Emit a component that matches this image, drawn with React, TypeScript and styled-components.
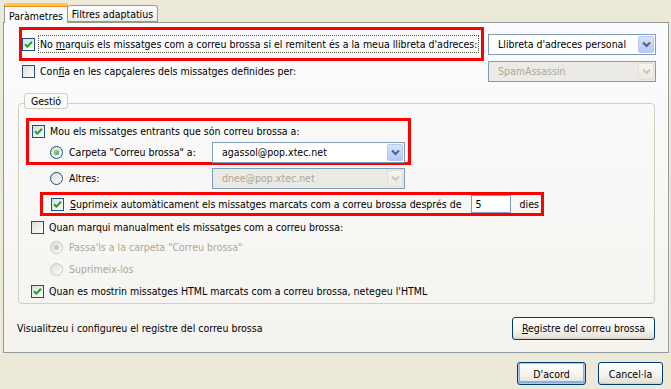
import styled, { createGlobalStyle } from "styled-components";

const GlobalStyle = createGlobalStyle`
  html, body {
    margin: 0;
    padding: 0;
    background: #ece9d8;
  }
  body {
    font-family: "DejaVu Sans Condensed", "DejaVu Sans", sans-serif;
    font-size: 10.5px;
    color: #000;
  }
`;

const Window = styled.div`
  width: 671px;
  height: 389px;
  box-sizing: border-box;
  padding-top: 3px;
  background: #ece9d8;
  overflow: hidden;
`;

const TabStrip = styled.div`
  display: flex;
  align-items: flex-end;
  height: 20px;
  margin: 0 0 -1px 4px;
  position: relative;
  z-index: 2;
`;

const Tab = styled.div<{ $active?: boolean }>`
  box-sizing: border-box;
  display: flex;
  align-items: center;
  justify-content: center;
  border: 1px solid #919b9c;
  border-radius: 3px 3px 0 0;
  ${(p) =>
    p.$active
      ? `
    height: 20px;
    width: 64px;
    padding-top: 2px;
    background: #fcfcfe;
    border-top: 3px solid #ffc83c;
    border-bottom: none;
    box-shadow: inset 0 1px 0 #e68b2c;
  `
      : `
    height: 17px;
    width: 90px;
    margin-bottom: 1px;
    border-left: none;
    background: linear-gradient(#ffffff, #ecebe6);
  `}
`;

const Panel = styled.div`
  position: relative;
  z-index: 1;
  box-sizing: border-box;
  margin-left: 3px;
  width: 666px;
  height: 331px;
  border: 1px solid #919b9c;
  background: linear-gradient(#fcfcfe, #f4f3ee);
  padding: 0 13px 0 14px;
  display: flex;
  flex-direction: column;
`;

const TopRow = styled.div`
  display: flex;
  align-items: center;
  justify-content: space-between;
  margin: 4px -1px 0 1px;
  height: 34px;
`;

const Row = styled.div<{ $h?: number; $mt?: number; $ml?: number }>`
  display: flex;
  align-items: center;
  height: ${(p) => p.$h ?? 20}px;
  margin-top: ${(p) => p.$mt ?? 0}px;
  margin-left: ${(p) => p.$ml ?? 0}px;
`;

const SpreadRow = styled(Row)`
  justify-content: space-between;
  margin-right: -1px;
`;

const Mark = styled.div<{ $w?: number; $h: number; $ml?: number; $mt?: number; $pl?: number }>`
  box-sizing: border-box;
  border: 3px solid #ff0000;
  height: ${(p) => p.$h}px;
  width: ${(p) => (p.$w ? `${p.$w}px` : "fit-content")};
  margin-left: ${(p) => p.$ml ?? 0}px;
  margin-top: ${(p) => p.$mt ?? 0}px;
  padding-left: ${(p) => p.$pl ?? 0}px;
`;

const MarkRow = styled(Mark)`
  display: flex;
  align-items: center;
`;

const Label = styled.span<{ $disabled?: boolean; $gap?: number; $w?: number }>`
  margin-left: ${(p) => p.$gap ?? 5}px;
  white-space: nowrap;
  color: ${(p) => (p.$disabled ? "#aca899" : "#000")};
  ${(p) => (p.$w ? `width: ${p.$w}px;` : "")}
  u {
    text-decoration: underline;
  }
`;

const FocusLabel = styled(Label)`
  border: 1px dotted #555;
  padding: 2px 1px;
  margin-left: 3px;
`;

const TrailLabel = styled(Label)`
  margin-right: 2px;
`;

const CheckBox = styled.span<{ $disabled?: boolean }>`
  flex: none;
  box-sizing: border-box;
  width: 13px;
  height: 13px;
  border: 1px solid ${(p) => (p.$disabled ? "#cac8bb" : "#1c5180")};
  background: linear-gradient(135deg, #dcdcd7, #ffffff);
  display: flex;
  align-items: center;
  justify-content: center;
`;

const RadioDot = styled.span<{ $disabled?: boolean }>`
  flex: none;
  box-sizing: border-box;
  width: 13px;
  height: 13px;
  border-radius: 50%;
  border: 1px solid ${(p) => (p.$disabled ? "#cac8bb" : "#1c5180")};
  background: linear-gradient(135deg, #dcdcd7, #ffffff);
  display: flex;
  align-items: center;
  justify-content: center;
`;

const Pip = styled.span<{ $disabled?: boolean }>`
  width: 5px;
  height: 5px;
  border-radius: 50%;
  background: ${(p) =>
    p.$disabled
      ? "#cac8bb"
      : "radial-gradient(circle at 35% 35%, #7fe07c, #21a121)"};
`;

const Combo = styled.div<{ $w: number; $disabled?: boolean }>`
  flex: none;
  box-sizing: border-box;
  width: ${(p) => p.$w}px;
  height: 21px;
  border: 1px solid #7f9db9;
  background: ${(p) => (p.$disabled ? "#ebeae4" : "#ffffff")};
  color: ${(p) => (p.$disabled ? "#aca899" : "#000")};
  display: flex;
  align-items: center;
  padding: 1px 1px 1px 9px;
`;

const ComboText = styled.span`
  flex: 1;
  white-space: nowrap;
`;

const ComboButton = styled.span<{ $disabled?: boolean }>`
  box-sizing: border-box;
  width: 16px;
  height: 17px;
  border-radius: 2px;
  border: 1px solid ${(p) => (p.$disabled ? "#e2e0d6" : "#b6c9f5")};
  background: ${(p) =>
    p.$disabled
      ? "linear-gradient(#f5f4ee, #eceae1)"
      : "linear-gradient(#d7e3fd, #b3c8f7)"};
  display: flex;
  align-items: center;
  justify-content: center;
`;

const Group = styled.div`
  position: relative;
  margin-top: 22px;
  border: 1px solid #d0d0bf;
  border-radius: 4px;
  padding: 14px 0 2px 0;
`;

const Caption = styled.div`
  position: absolute;
  top: -11px;
  left: 5px;
  box-sizing: border-box;
  width: 44px;
  height: 16px;
  border: 1px solid #d0d0bf;
  border-radius: 3px;
  background: #fbfbfa;
  display: flex;
  align-items: center;
  justify-content: center;
`;

const NumberBox = styled.div`
  box-sizing: border-box;
  width: 40px;
  height: 18px;
  margin-left: 9px;
  border: 1px solid #7f9db9;
  background: #fff;
  padding-left: 4px;
  display: flex;
  align-items: center;
`;

const BottomRow = styled.div`
  display: flex;
  align-items: center;
  justify-content: space-between;
  margin: 12px 0 0 -1px;
  height: 24px;
`;

const Button = styled.div<{ $w: number; $default?: boolean }>`
  box-sizing: border-box;
  width: ${(p) => p.$w}px;
  height: 23px;
  border: 1px solid #003c74;
  border-radius: 3px;
  background: linear-gradient(#ffffff, #f3f2ec 60%, #e6e3d8 90%, #d6d0c5);
  display: flex;
  align-items: center;
  justify-content: center;
  white-space: nowrap;
  box-shadow: ${(p) =>
    p.$default
      ? "inset 0 0 0 1px #a9c6f5, inset 0 -1px 0 2px #89ade4"
      : "inset 0 -1px 0 #d6d0c5"};
  u {
    text-decoration: underline;
  }
`;

const Footer = styled.div`
  display: flex;
  justify-content: flex-end;
  gap: 12px;
  margin-top: 9px;
  padding-right: 8px;
`;

function Check({ checked, disabled }: { checked?: boolean; disabled?: boolean }) {
  return (
    <CheckBox $disabled={disabled}>
      {checked && (
        <svg width="9" height="9" viewBox="0 0 9 9">
          <path
            d="M1 4.2 L3.4 6.6 L8 1.8"
            fill="none"
            stroke={disabled ? "#cac8bb" : "#21a121"}
            strokeWidth="2"
          />
        </svg>
      )}
    </CheckBox>
  );
}

function Radio({ checked, disabled }: { checked?: boolean; disabled?: boolean }) {
  return (
    <RadioDot $disabled={disabled}>
      {checked && <Pip $disabled={disabled} />}
    </RadioDot>
  );
}

function Select({ width, value, disabled }: { width: number; value: string; disabled?: boolean }) {
  const arrow = disabled ? "#c9c7ba" : "#4d6185";
  return (
    <Combo $w={width} $disabled={disabled}>
      <ComboText>{value}</ComboText>
      <ComboButton $disabled={disabled}>
        <svg width="9" height="7" viewBox="0 0 9 7">
          <path d="M1 1.5 L4.5 5 L8 1.5" fill="none" stroke={arrow} strokeWidth="2" />
        </svg>
      </ComboButton>
    </Combo>
  );
}

export default function App() {
  return (
    <Window>
      <GlobalStyle />
      <TabStrip>
        <Tab $active>Paràmetres</Tab>
        <Tab>Filtres adaptatius</Tab>
      </TabStrip>
      <Panel>
        <TopRow>
          <MarkRow $w={465} $h={34} $pl={0}>
            <Check checked />
            <FocusLabel>
              No <u>m</u>arquis els missatges com a correu brossa si el remitent és a la meua
              llibreta d'adreces:
            </FocusLabel>
          </MarkRow>
          <Select width={168} value="Llibreta d'adreces personal" />
        </TopRow>
        <SpreadRow $h={20} $ml={4}>
          <Row>
            <Check />
            <Label>
              Con<u>f</u>ia en les capçaleres dels missatges definides per:
            </Label>
          </Row>
          <Select width={168} value="SpamAssassin" disabled />
        </SpreadRow>

        <Group>
          <Caption>Gestió</Caption>
          <Mark $w={385} $h={47} $ml={7} $pl={3}>
            <Row $h={20}>
              <Check checked />
              <Label>Mou els missatges entrants que són correu brossa a:</Label>
            </Row>
            <Row $h={22} $ml={18}>
              <Radio checked />
              <Label $gap={6} $w={143}>
                Carpeta "Correu brossa" a:
              </Label>
              <Select width={193} value="agassol@pop.xtec.net" />
            </Row>
          </Mark>
          <Row $h={20} $mt={3} $ml={31}>
            <Radio />
            <Label $gap={6} $w={143}>
              Altres:
            </Label>
            <Select width={193} value="dnee@pop.xtec.net" disabled />
          </Row>
          <MarkRow $h={24} $ml={21} $mt={4} $pl={8}>
            <Check checked />
            <Label $gap={6}>
              <u>S</u>uprimeix automàticament els missatges marcats com a correu brossa després de
            </Label>
            <NumberBox>5</NumberBox>
            <TrailLabel $gap={9}>dies</TrailLabel>
          </MarkRow>
          <Row $h={20} $mt={1} $ml={12}>
            <Check />
            <Label>Quan marqui manualment els missatges com a correu brossa:</Label>
          </Row>
          <Row $h={20} $ml={31}>
            <Radio checked disabled />
            <Label $gap={6} $disabled>
              Passa'ls a la carpeta "Correu brossa"
            </Label>
          </Row>
          <Row $h={20} $mt={2} $ml={31}>
            <Radio disabled />
            <Label $gap={6} $disabled>
              Suprimeix-los
            </Label>
          </Row>
          <Row $h={20} $mt={2} $ml={12}>
            <Check checked />
            <Label>
              Quan es mostrin missatges HTML marcats com a correu brossa, netegeu l'HTML
            </Label>
          </Row>
        </Group>

        <BottomRow>
          <span>Visualitzeu i configureu el registre del correu brossa</span>
          <Button $w={143}>
            <span>
              <u>R</u>egistre del correu brossa
            </span>
          </Button>
        </BottomRow>
      </Panel>
      <Footer>
        <Button $w={69} $default>
          D'acord
        </Button>
        <Button $w={65}>Cancel·la</Button>
      </Footer>
    </Window>
  );
}
